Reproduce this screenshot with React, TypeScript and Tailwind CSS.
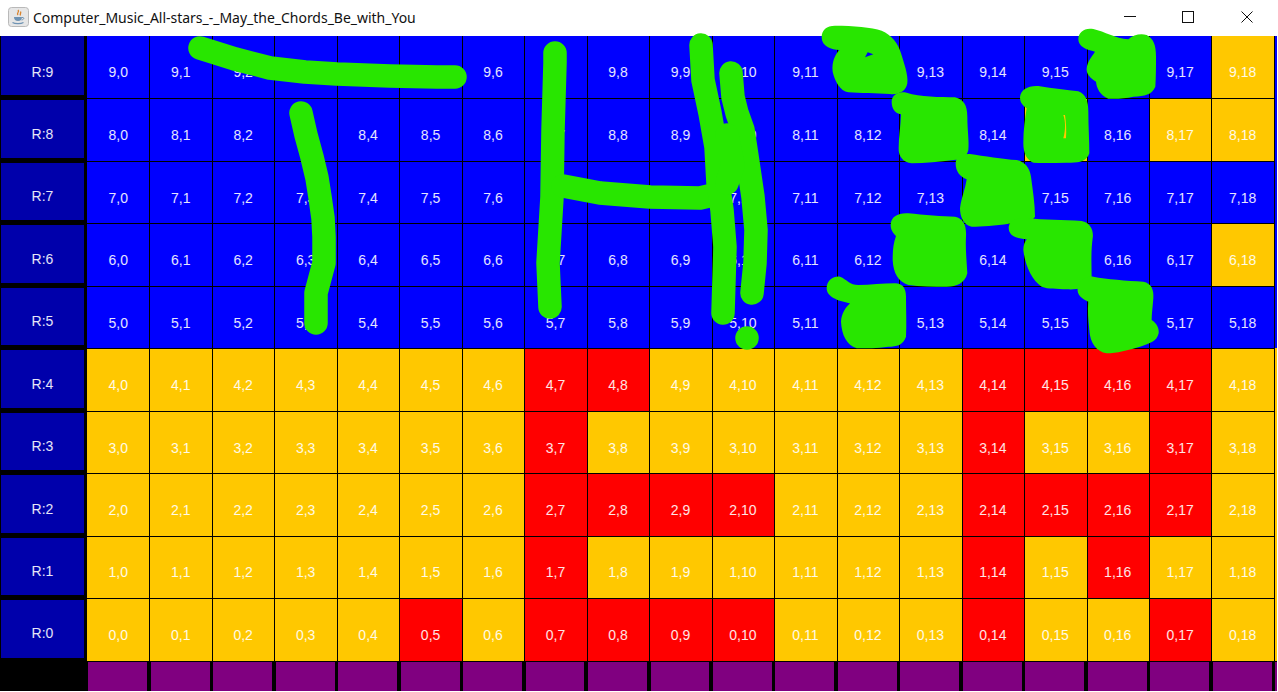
import React from 'react';

const ROWS = [9, 8, 7, 6, 5, 4, 3, 2, 1, 0];
const COLS = Array.from({ length: 19 }, (_, i) => i);

const RED: Record<number, number[]> = {
  4: [7, 8, 14, 15, 16, 17],
  3: [7, 14, 17],
  2: [7, 8, 9, 10, 14, 15, 16, 17],
  1: [7, 14, 16],
  0: [5, 7, 8, 9, 10, 14, 17],
};

const GOLD_TOP: Record<number, number[]> = {
  9: [18],
  8: [15, 17, 18],
  6: [18],
};

const cellColor = (r: number, c: number) => {
  if (RED[r]?.includes(c)) return 'bg-[#ff0000]';
  if (r <= 4 || GOLD_TOP[r]?.includes(c)) return 'bg-[#ffc800]';
  return 'bg-[#0000ff]';
};

// Hand drawn marker strokes, page coordinates
const LINES = [
  'M200 48 L235 59 L270 68 L305 72 L337 74 L390 76 L437 77 L455 77',
  'M301 113 L306 135 L312 157 L317 178 L320 197 L323 218 L324 237 L324 263 L320 278 L316 293 L316 323',
  'M555 53 L555 63 L553 130 L552 197 L550 230 L548 263 L550 307',
  'M563 186 L600 193 L650 197 L700 198 L713 195',
  'M701 45 L703 80 L710 113 L716 147 L718 183 L722 210 L725 247 L723 313',
  'M731 73 L733 97 L737 113 L743 130 L748 163 L753 197 L756 230 L755 263 L752 293',
  'M727 135 L733 165 L727 183',
  'M747 338 L747 338',
];

// Filled squares, traced at 3x from (800,20)
const BLOBS = [
  'M65 52 C65 30 80 17 105 17 C160 17 215 22 245 32 C275 45 295 70 303 100 C312 130 325 165 322 190 C318 215 295 225 270 222 C230 220 180 220 145 217 C120 212 105 185 98 155 C95 125 105 105 118 90 C95 90 65 80 65 52 Z',
  'M275 245 C275 225 295 212 320 218 C360 232 420 230 465 232 C490 238 502 255 502 290 C502 330 508 365 505 390 C500 412 485 420 460 420 C420 425 375 430 335 430 C310 428 295 410 296 385 C296 350 302 320 303 283 C285 280 275 265 275 245 Z',
  'M467 430 C467 412 482 400 510 402 C550 408 610 418 650 420 C675 425 690 445 693 470 C698 510 705 550 705 590 C690 610 680 605 640 610 C600 615 545 622 515 620 C490 615 480 590 480 565 C485 530 495 510 500 478 C480 470 467 455 467 430 Z',
  'M272 615 C272 590 295 578 325 580 C370 585 430 590 465 590 C490 595 500 615 498 650 C496 690 500 720 502 760 C495 790 470 800 440 800 C400 800 360 800 325 795 C295 785 280 760 278 720 C278 690 280 670 288 648 C280 640 272 630 272 615 Z',
  'M80 805 C80 780 100 768 120 770 C140 778 150 795 175 795 C210 795 250 790 285 790 C308 790 318 805 318 830 C318 870 320 910 318 950 C310 975 290 980 265 980 C230 985 200 985 170 985 C140 975 125 945 123 905 C125 880 135 865 150 850 C125 845 80 835 80 805 Z',
  'M626 622 C628 600 650 592 685 595 C730 600 790 600 845 603 C870 608 882 630 878 655 C872 700 875 740 875 780 C860 805 830 810 800 808 C770 805 745 808 725 800 C695 780 675 735 670 690 C670 675 675 665 680 658 C650 655 626 650 626 622 Z',
  'M833 803 C838 780 855 768 880 770 C920 778 980 782 1030 785 C1055 790 1062 810 1060 835 C1058 860 1055 885 1055 900 C1070 910 1078 925 1076 940 C1070 965 1050 970 1020 980 C985 990 950 1000 920 1000 C890 995 870 970 868 930 C865 900 862 870 865 845 C845 835 830 825 833 803 Z',
  'M660 232 C662 208 685 196 715 198 C760 205 800 210 835 214 C858 222 865 245 865 275 C865 320 868 360 868 400 C860 425 835 430 800 428 C765 428 730 430 700 428 C680 420 670 400 670 370 C670 330 675 295 680 265 C670 258 660 250 660 232 Z',
  'M835 58 C835 35 855 22 880 27 C915 35 945 55 985 58 C1000 45 1020 40 1040 45 C1060 55 1068 75 1068 110 C1068 140 1068 170 1066 200 C1055 225 1035 228 1000 230 C975 235 950 238 925 236 C900 225 890 205 888 185 C870 175 858 160 860 145 C862 125 875 110 885 95 C860 90 835 80 835 58 Z',
];

const JavaIcon = () => (
  <svg width="21" height="20" viewBox="0 0 21 20" className="shrink-0">
    <rect x="0.5" y="0.5" width="20" height="19" rx="3" fill="#e6e6e6" stroke="#b9b9b9" />
    <path d="M10 3 C12 5 8 6 10 8 M12.5 4.5 C13.5 6 11.5 7 12.5 8.5" fill="none" stroke="#d9822b" strokeWidth="1.3" />
    <path d="M6 10 H14 C14 12.5 12.5 14 10 14 C7.5 14 6 12.5 6 10 Z" fill="#6f93b3" />
    <path d="M14 10.5 C16.5 10 16.5 12.5 13.5 13" fill="none" stroke="#6f93b3" />
    <path d="M4.5 15.5 C7 17 13 17 15.5 15.5" fill="none" stroke="#6f93b3" strokeWidth="1.2" />
  </svg>
);

export default function App() {
  return (
    <div className="relative w-[1278px] h-[692px] bg-white overflow-hidden font-['Liberation_Sans',sans-serif]">
      {/* Title bar */}
      <div className="h-9 flex items-center bg-white pl-2 pr-[2px] pb-[2px]">
        <JavaIcon />
        <span className="ml-1 text-[14px] text-[#111] font-['Noto_Sans',sans-serif] tracking-[-0.02px] whitespace-nowrap">
          Computer_Music_All-stars_-_May_the_Chords_Be_with_You
        </span>
        <div className="ml-auto flex items-center">
          <div className="w-[58.5px] flex justify-center">
            <svg width="12" height="12" viewBox="0 0 12 12"><path d="M0 5.5 H12" stroke="#111" /></svg>
          </div>
          <div className="w-[58.5px] flex justify-center">
            <svg width="12" height="12" viewBox="0 0 12 12"><rect x="0.5" y="0.5" width="11" height="11" fill="none" stroke="#111" /></svg>
          </div>
          <div className="w-[58.5px] flex justify-center">
            <svg width="12" height="12" viewBox="0 0 12 12"><path d="M0.5 0.5 L11.5 11.5 M11.5 0.5 L0.5 11.5" stroke="#111" /></svg>
          </div>
        </div>
      </div>

      {/* Board */}
      <div className="mr-px h-[655px] bg-black grid grid-cols-[87px_repeat(19,62.47px)_1fr] grid-rows-[repeat(10,62.47px)_1fr] text-white/90 text-[14px]">
        {ROWS.map((r) => (
          <React.Fragment key={r}>
            <div className={`ml-px mr-[3px] mb-[3px] ${r === 9 ? 'pt-[14px]' : 'mt-[2px] pt-[10px]'} bg-[#0000ab] flex items-center justify-center`}>
              R:{r}
            </div>
            {COLS.map((c) => (
              <div
                key={c}
                className={`${cellColor(r, c)} ${c === 0 ? '' : 'border-l pr-px'} ${r === 9 ? '' : 'border-t'} border-black flex items-center justify-center pt-[11px]`}
              >
                {r},{c}
              </div>
            ))}
            <div className={`${r <= 4 ? 'bg-[#ffc800]' : 'bg-[#0000ff]'} border-l border-black`} />
          </React.Fragment>
        ))}

        {/* Purple strip under the board */}
        <div />
        {COLS.map((c) => (
          <div key={c} className="ml-[1.3px] mr-[2.3px] mt-[1px] bg-[#800080]" />
        ))}
        <div className="ml-[1.3px] mt-[1px] bg-[#800080]" />
      </div>

      {/* Marker drawing on top of the window */}
      <svg className="absolute inset-0 pointer-events-none" width="1278" height="692" viewBox="0 0 1278 692">
        <g stroke="#28e600" strokeWidth="23.5" strokeLinecap="round" strokeLinejoin="round" fill="none">
          {LINES.map((d) => (
            <path key={d} d={d} />
          ))}
        </g>
        <g transform="translate(800 20) scale(0.33333)" fill="#28e600">
          {BLOBS.map((d) => (
            <path key={d} d={d} />
          ))}
          <path d="M195 112 L220 103 L203 97 Z" fill="#0000ff" />
          <path d="M790 285 C797 305 797 330 790 355 L798 355 C800 330 798 305 795 285 Z" fill="#ffc800" />
        </g>
      </svg>
    </div>
  );
}
